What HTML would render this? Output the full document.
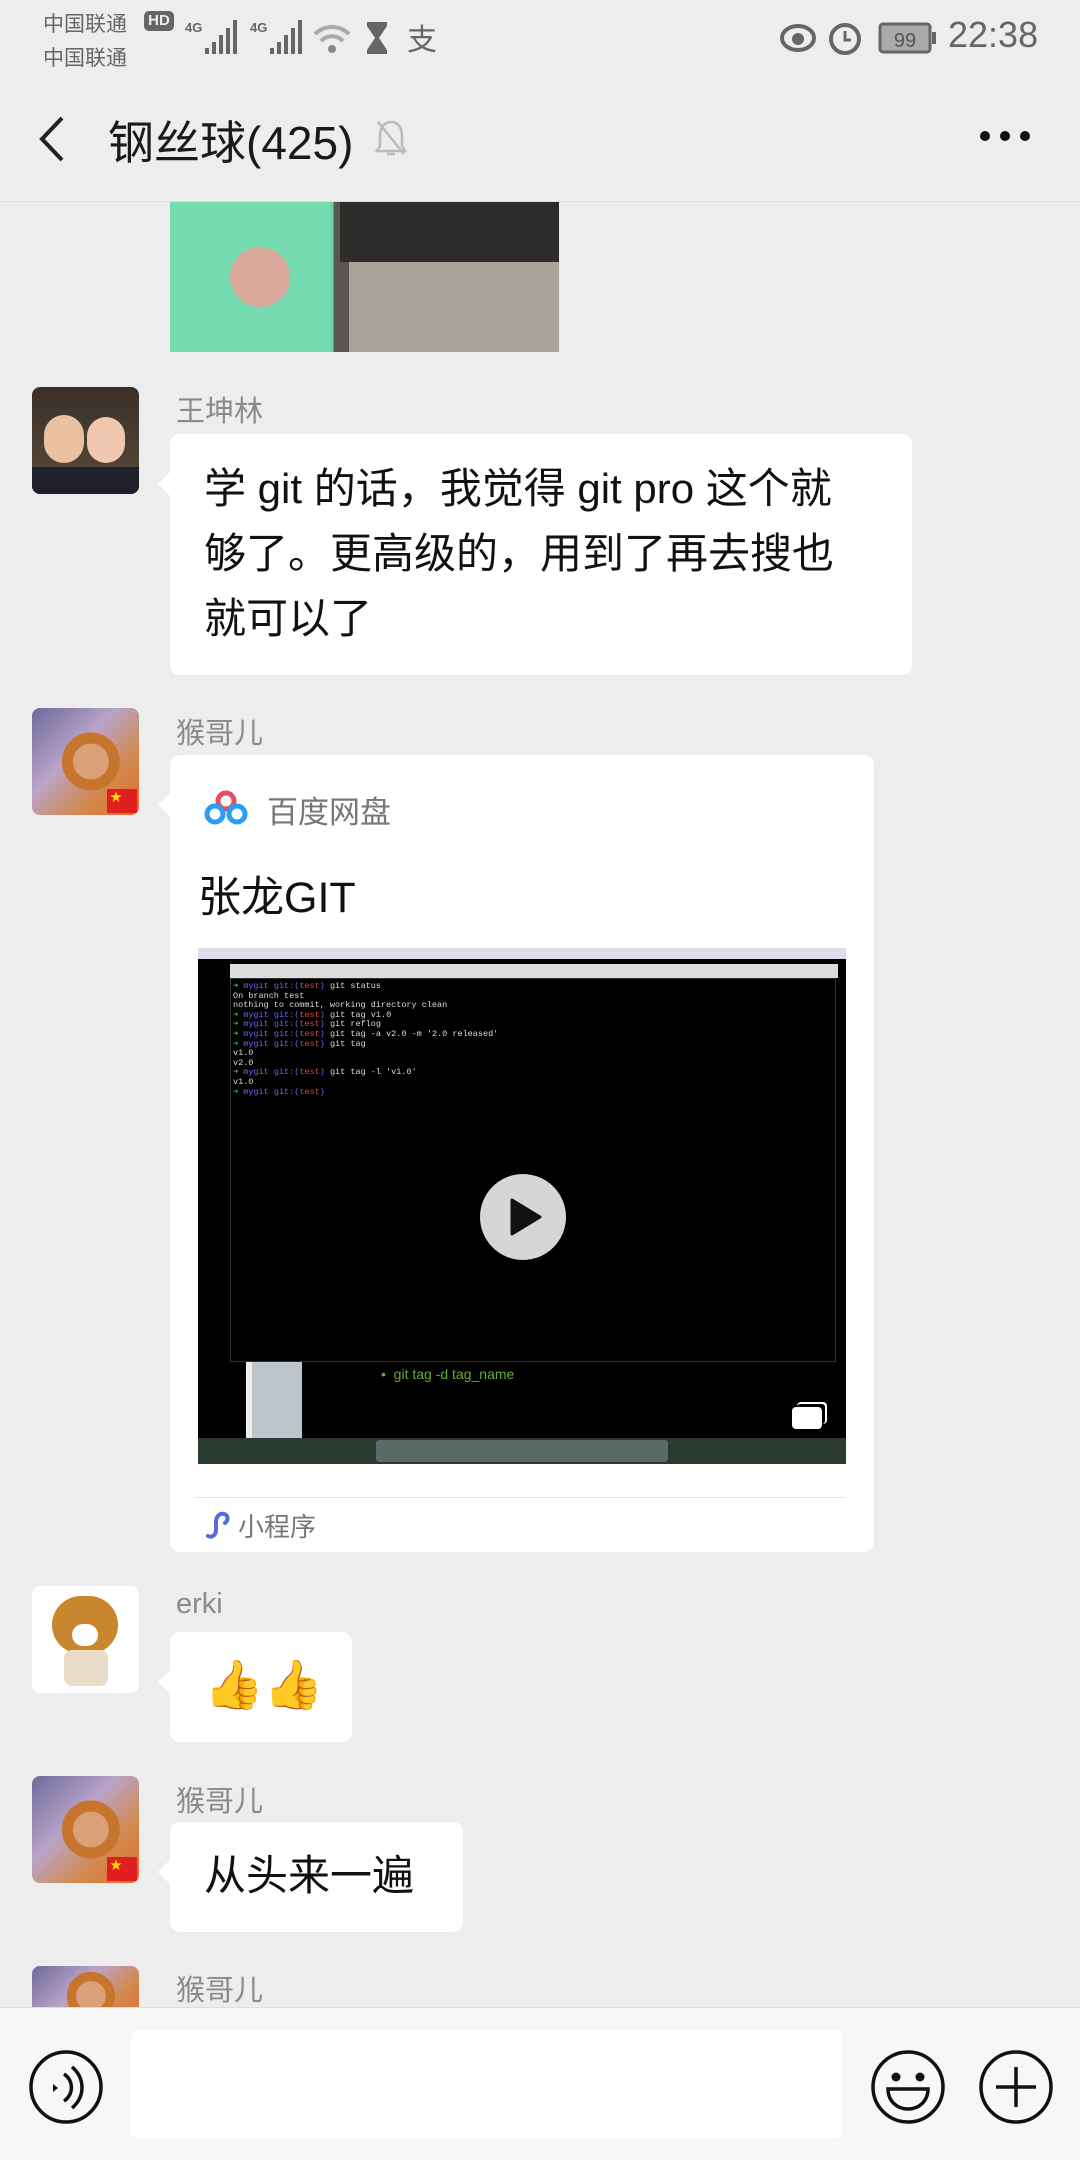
<!DOCTYPE html>
<html><head><meta charset="utf-8">
<style>
*{margin:0;padding:0;box-sizing:border-box}
body{width:1080px;height:2160px;background:#ededed;font-family:"Liberation Sans","Noto Sans CJK SC",sans-serif;position:relative;overflow:hidden}
.abs{position:absolute}
.sb{color:#666;font-size:21px}
.name{position:absolute;left:176px;font-size:29px;color:#8a8a8a}
.av{position:absolute;left:32px;width:107px;height:107px;border-radius:8px;overflow:hidden}
.bub{position:absolute;left:170px;background:#fff;border-radius:10px;color:#111}
.bub:before{content:"";position:absolute;left:-12px;top:38px;border:12px solid transparent;border-left:0;border-right-color:#fff}
.monkey{background:radial-gradient(circle at 55% 50%,#d9a07a 0 22%,#c7752d 23% 36%,transparent 37%),linear-gradient(135deg,#6d6a9a,#b9a3c8 40%,#d28a50 70%,#e06a2a)}
.flag{position:absolute;right:2px;bottom:2px;width:30px;height:24px;background:#e02020}
.flag:after{content:"★";position:absolute;left:3px;top:-1px;color:#ffde00;font-size:12px}
</style></head><body>
<div class="abs sb" style="left:43px;top:8px">中国联通</div>
<div class="abs" style="left:144px;top:11px;width:30px;height:20px;background:#666;border-radius:5px;color:#eee;font-size:15px;font-weight:bold;text-align:center;line-height:20px">HD</div>
<div class="abs sb" style="left:43px;top:42px">中国联通</div>
<svg class="abs" style="left:185px;top:14px" width="270" height="42" viewBox="0 0 270 42">
<text x="0" y="18" font-size="13" fill="#666" font-family="Liberation Sans" font-weight="bold">4G</text>
<g fill="#666"><rect x="20" y="34" width="4" height="6"/><rect x="27" y="28" width="4" height="12"/><rect x="34" y="21" width="4" height="19"/><rect x="41" y="14" width="4" height="26"/><rect x="48" y="6" width="4" height="34"/></g>
<text x="65" y="18" font-size="13" fill="#666" font-family="Liberation Sans" font-weight="bold">4G</text>
<g fill="#666"><rect x="85" y="34" width="4" height="6"/><rect x="92" y="28" width="4" height="12"/><rect x="99" y="21" width="4" height="19"/><rect x="106" y="14" width="4" height="26"/><rect x="113" y="6" width="4" height="34"/></g>
<g fill="none" stroke="#aaa" stroke-width="4"><path d="M130 20a24 24 0 0 1 34 0"/><path d="M136 27a15 15 0 0 1 22 0"/></g><circle cx="147" cy="35" r="4" fill="#888"/>
<path d="M182 8h20v4l-8 12 8 12v4h-20v-4l8-12-8-12z" fill="#666"/>
<text x="222" y="36" font-size="30" fill="#666" font-family="Noto Sans CJK SC">支</text>
</svg>
<svg class="abs" style="left:778px;top:18px" width="160" height="40" viewBox="0 0 160 40">
<ellipse cx="20" cy="20" rx="16" ry="12" fill="none" stroke="#666" stroke-width="4"/><circle cx="20" cy="21" r="6" fill="#666"/>
<circle cx="67" cy="21" r="14" fill="none" stroke="#666" stroke-width="4"/><path d="M67 13v9h6" stroke="#666" stroke-width="3" fill="none"/>
<rect x="102" y="6" width="50" height="28" rx="3" fill="#aaa" stroke="#666" stroke-width="3"/><rect x="154" y="14" width="4" height="12" fill="#666"/>
<text x="127" y="29" font-size="20" text-anchor="middle" fill="#555" font-family="Liberation Sans">99</text>
</svg>
<div class="abs" style="left:948px;top:14px;font-size:36px;color:#666">22:38</div>
<svg class="abs" style="left:36px;top:114px" width="30" height="50"><path d="M26 4L6 25l20 21" fill="none" stroke="#222" stroke-width="4"/></svg>
<div class="abs" style="left:108px;top:107px;font-size:46px;color:#1a1a1a">钢丝球(425)</div>
<svg class="abs" style="left:374px;top:118px" width="34" height="40"><path d="M17 4c-8 0-11 7-11 14v10l-3 5h28l-3-5V18c0-7-3-14-11-14zM13 36h8M4 4l26 32" fill="none" stroke="#bbb" stroke-width="2.5"/></svg>
<div class="abs" style="left:980px;top:131px;width:10px;height:10px;border-radius:5px;background:#111;box-shadow:20px 0 #111,40px 0 #111"></div>
<div class="abs" style="left:0;top:201px;width:1080px;height:1px;background:#ddd"></div>
<div class="abs" style="left:170px;top:202px;width:389px;height:150px;background:linear-gradient(90deg,#6fd3a9 0 42%,#5a5752 42% 46%,#a9a49a 46% 100%)">
<div class="abs" style="left:0;top:0;width:160px;height:150px;background:#76dbb1"></div>
<div class="abs" style="left:60px;top:45px;width:60px;height:60px;border-radius:30px;background:#d8a89a"></div>
<div class="abs" style="left:170px;top:0;width:219px;height:60px;background:#2e2c2a"></div>
</div>
<div class="av" style="top:387px;background:linear-gradient(#3a3028,#5a4a3a)"><div class="abs" style="left:12px;top:28px;width:40px;height:48px;border-radius:20px;background:#e9c0a0"></div><div class="abs" style="left:55px;top:30px;width:38px;height:46px;border-radius:19px;background:#f0c8b0"></div><div class="abs" style="left:0;top:80px;width:107px;height:27px;background:#20202a"></div></div>
<div class="name" style="top:388px">王坤林</div>
<div class="bub" style="top:434px;width:742px;height:241px;padding:22px 0 0 34px;font-size:42px;line-height:65px;white-space:nowrap">学 git 的话，我觉得 git pro 这个就<br>够了。更高级的，用到了再去搜也<br>就可以了</div>
<div class="av monkey" style="top:708px"><div class="flag"></div></div>
<div class="name" style="top:710px">猴哥儿</div>
<div class="bub" style="top:755px;width:704px;height:797px">
<svg class="abs" style="left:34px;top:35px" width="44" height="36" viewBox="0 0 44 36"><circle cx="22" cy="11" r="8" fill="none" stroke="#e84a5f" stroke-width="5"/><circle cx="11" cy="24" r="8" fill="none" stroke="#2a9df4" stroke-width="5"/><circle cx="33" cy="24" r="8" fill="none" stroke="#2a9df4" stroke-width="5"/></svg>
<div class="abs" style="left:97px;top:32px;font-size:31px;color:#777">百度网盘</div>
<div class="abs" style="left:28px;top:108px;font-size:43px;color:#111">张龙GIT</div>
<div class="abs" style="left:28px;top:193px;width:648px;height:516px;background:#000;overflow:hidden">
<div class="abs" style="left:0;top:0;width:648px;height:11px;background:#dde"></div>
<div class="abs" style="left:32px;top:16px;width:608px;height:14px;background:#ddd"></div>
<div class="abs" style="left:32px;top:30px;width:606px;height:384px;border:1px solid #333;font-family:'Liberation Mono',monospace;font-size:8.5px;line-height:9.6px;color:#ddd;padding:3px 2px">
<div><span style="color:#4c4">➜</span> <span style="color:#66f">mygit git:(</span><span style="color:#d44">test</span><span style="color:#66f">)</span> git status</div><div>On branch test</div><div>nothing to commit, working directory clean</div>
<div><span style="color:#4c4">➜</span> <span style="color:#66f">mygit git:(</span><span style="color:#d44">test</span><span style="color:#66f">)</span> git tag v1.0</div>
<div><span style="color:#4c4">➜</span> <span style="color:#66f">mygit git:(</span><span style="color:#d44">test</span><span style="color:#66f">)</span> git reflog</div>
<div><span style="color:#4c4">➜</span> <span style="color:#66f">mygit git:(</span><span style="color:#d44">test</span><span style="color:#66f">)</span> git tag -a v2.0 -m '2.0 released'</div>
<div><span style="color:#4c4">➜</span> <span style="color:#66f">mygit git:(</span><span style="color:#d44">test</span><span style="color:#66f">)</span> git tag</div><div>v1.0</div><div>v2.0</div>
<div><span style="color:#4c4">➜</span> <span style="color:#66f">mygit git:(</span><span style="color:#d44">test</span><span style="color:#66f">)</span> git tag -l 'v1.0'</div><div>v1.0</div>
<div><span style="color:#4c4">➜</span> <span style="color:#66f">mygit git:(</span><span style="color:#d44">test</span><span style="color:#66f">)</span></div></div>
<div class="abs" style="left:48px;top:414px;width:56px;height:76px;background:#bcc4cc;border-left:6px solid #eee"></div>
<div class="abs" style="left:183px;top:418px;font-size:14px;color:#6a3">•&nbsp; git tag -d tag_name</div>
<div class="abs" style="left:0;top:490px;width:648px;height:26px;background:#2a3a2e"></div>
<div class="abs" style="left:178px;top:492px;width:292px;height:22px;background:#5a6a66;border-radius:3px"></div>
<div class="abs" style="left:282px;top:226px;width:86px;height:86px;border-radius:43px;background:#d6d6d6"></div>
<svg class="abs" style="left:310px;top:250px" width="36" height="38"><path d="M4 2l28 17L4 36z" fill="#111" stroke="#111" stroke-width="3" stroke-linejoin="round"/></svg>
<div class="abs" style="left:594px;top:459px;width:30px;height:22px;border-radius:4px;background:#fff;box-shadow:4px -4px 0 -1px #000,5px -5px 0 0 #fff"></div>
</div>
<div class="abs" style="left:25px;top:742px;width:650px;height:1px;background:#e3e3e3"></div>
<svg class="abs" style="left:34px;top:755px" width="28" height="30"><path d="M4 26c4 2 8-1 8-6v-8c0-6 4-9 8-8s5 6 1 9" fill="none" stroke="#5b6bd6" stroke-width="4" stroke-linecap="round"/></svg>
<div class="abs" style="left:68px;top:752px;font-size:26px;color:#777">小程序</div>
</div>
<div class="av" style="top:1586px;background:#fff"><div class="abs" style="left:20px;top:10px;width:66px;height:58px;border-radius:30px;background:#c8862e"></div><div class="abs" style="left:40px;top:38px;width:26px;height:22px;border-radius:12px;background:#fff"></div><div class="abs" style="left:32px;top:64px;width:44px;height:36px;border-radius:8px;background:#e9dcc8"></div></div>
<div class="name" style="top:1588px">erki</div>
<div class="bub" style="top:1632px;width:182px;height:110px;padding:26px 0 0 34px;font-size:48px;line-height:54px;font-family:'Noto Color Emoji','DejaVu Sans',sans-serif">👍👍</div>
<div class="av monkey" style="top:1776px"><div class="flag"></div></div>
<div class="name" style="top:1778px">猴哥儿</div>
<div class="bub" style="top:1822px;width:293px;height:110px;padding:22px 0 0 34px;font-size:42px;line-height:64px">从头来一遍</div>
<div class="av monkey" style="top:1966px;height:60px"></div>
<div class="name" style="top:1967px">猴哥儿</div>
<div class="abs" style="left:0;top:2007px;width:1080px;height:153px;background:#f7f7f7;border-top:1px solid #ddd"></div>
<svg class="abs" style="left:26px;top:2047px" width="80" height="80"><circle cx="40" cy="40" r="35" fill="none" stroke="#111" stroke-width="3.5"/><path d="M27 37l5 4-5 4z" fill="#111"/><path d="M38 27a16 16 0 0 1 0 27M46 20a26 26 0 0 1 0 41" fill="none" stroke="#111" stroke-width="3.5"/></svg>
<div class="abs" style="left:131px;top:2030px;width:711px;height:109px;background:#fff;border-radius:8px"></div>
<svg class="abs" style="left:868px;top:2047px" width="80" height="80"><circle cx="40" cy="40" r="35" fill="none" stroke="#111" stroke-width="3.5"/><circle cx="28" cy="30" r="4.5" fill="#111"/><circle cx="52" cy="30" r="4.5" fill="#111"/><path d="M20 42h40c0 12-9 20-20 20s-20-8-20-20z" fill="none" stroke="#111" stroke-width="3.5"/></svg>
<svg class="abs" style="left:976px;top:2047px" width="80" height="80"><circle cx="40" cy="40" r="35" fill="none" stroke="#111" stroke-width="3.5"/><path d="M40 20v40M20 40h40" stroke="#111" stroke-width="3.5"/></svg>
</body></html>
